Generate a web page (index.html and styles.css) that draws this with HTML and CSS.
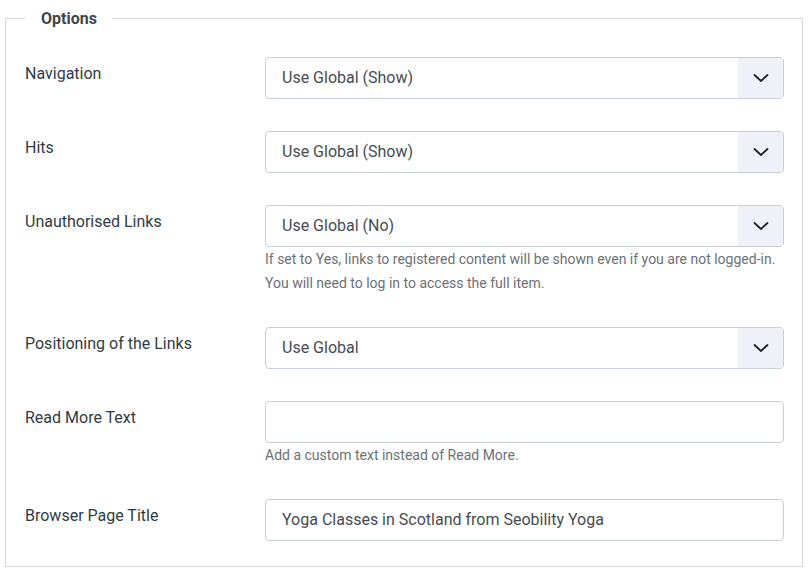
FILE: index.html
```html
<!DOCTYPE html>
<html lang="en">
<head>
<meta charset="utf-8">
<title>Options</title>
<link rel="stylesheet" href="styles.css">
</head>
<body>
<fieldset class="options">
  <legend class="options-legend">Options</legend>

  <div class="row">
    <div class="label">Navigation</div>
    <div class="control">
      <div class="select"><span class="select-value">Use Global (Show)</span><span class="select-caret"><svg width="16" height="10" viewBox="0 0 16 10"><path d="M1.5 2 L8 8 L14.5 2" fill="none" stroke="#1f2328" stroke-width="1.8" stroke-linecap="round" stroke-linejoin="round"/></svg></span></div>
    </div>
  </div>

  <div class="row">
    <div class="label">Hits</div>
    <div class="control">
      <div class="select"><span class="select-value">Use Global (Show)</span><span class="select-caret"><svg width="16" height="10" viewBox="0 0 16 10"><path d="M1.5 2 L8 8 L14.5 2" fill="none" stroke="#1f2328" stroke-width="1.8" stroke-linecap="round" stroke-linejoin="round"/></svg></span></div>
    </div>
  </div>

  <div class="row">
    <div class="label">Unauthorised Links</div>
    <div class="control">
      <div class="select"><span class="select-value">Use Global (No)</span><span class="select-caret"><svg width="16" height="10" viewBox="0 0 16 10"><path d="M1.5 2 L8 8 L14.5 2" fill="none" stroke="#1f2328" stroke-width="1.8" stroke-linecap="round" stroke-linejoin="round"/></svg></span></div>
      <div class="help">If set to Yes, links to registered content will be shown even if you are not logged-in. You will need to log in to access the full item.</div>
    </div>
  </div>

  <div class="row">
    <div class="label">Positioning of the Links</div>
    <div class="control">
      <div class="select"><span class="select-value">Use Global</span><span class="select-caret"><svg width="16" height="10" viewBox="0 0 16 10"><path d="M1.5 2 L8 8 L14.5 2" fill="none" stroke="#1f2328" stroke-width="1.8" stroke-linecap="round" stroke-linejoin="round"/></svg></span></div>
    </div>
  </div>

  <div class="row">
    <div class="label">Read More Text</div>
    <div class="control">
      <input class="text-input" type="text" value="">
      <div class="help">Add a custom text instead of Read More.</div>
    </div>
  </div>

  <div class="row">
    <div class="label">Browser Page Title</div>
    <div class="control">
      <input class="text-input" type="text" value="Yoga Classes in Scotland from Seobility Yoga">
    </div>
  </div>
</fieldset>
</body>
</html>
```

FILE: styles.css
```css
html, body {
  margin: 0;
  padding: 0;
  background: #ffffff;
}

body {
  font-family: Roboto, "Liberation Sans", Arial, sans-serif;
  font-size: 16px;
  color: #2b3540;
}

.options {
  margin: 6px 8px 0 5px;
  padding: 27px 18px 25px 19px;
  border: 1px solid #d3d8dd;
  min-width: 0;
}

.options-legend {
  padding: 1px 16px 0 16px;
  font-size: 16px;
  font-weight: 700;
  line-height: 23px;
  color: #40464d;
}

.row {
  display: grid;
  grid-template-columns: 240px 1fr;
  margin-bottom: 32px;
}

.row:last-child {
  margin-bottom: 0;
}

.label {
  padding-top: 5px;
  line-height: 24px;
  color: #313b46;
}

.control {
  display: flex;
  flex-direction: column;
  min-width: 0;
}

.select {
  display: flex;
  height: 42px;
  box-sizing: border-box;
  border: 1px solid #c8cfd6;
  border-radius: 4px;
  overflow: hidden;
}

.select-value {
  flex: 1;
  display: flex;
  align-items: center;
  padding: 0 0 1px 16px;
  color: #464c53;
  font-size: 16px;
}

.select-caret {
  width: 45px;
  display: flex;
  align-items: center;
  justify-content: center;
  background: #eef2f8;
}

.text-input {
  display: block;
  width: 100%;
  height: 42px;
  box-sizing: border-box;
  margin: 0;
  border: 1px solid #c8cfd6;
  border-radius: 4px;
  padding: 0 16px 1px 16px;
  font-family: Roboto, "Liberation Sans", Arial, sans-serif;
  font-size: 16px;
  color: #464c53;
  background: #ffffff;
  outline: none;
}

.help {
  font-size: 14px;
  line-height: 24px;
  color: #6b7178;
}
```
